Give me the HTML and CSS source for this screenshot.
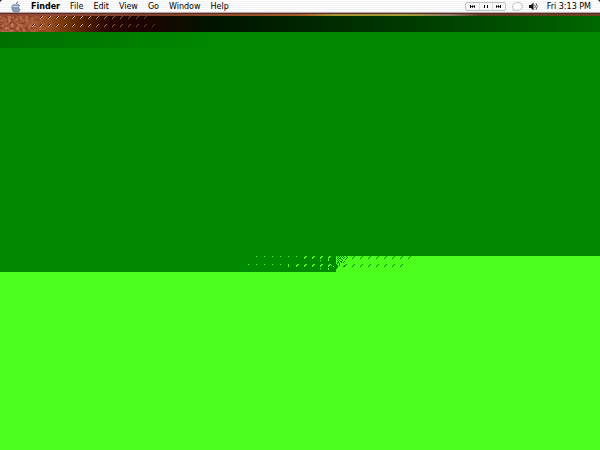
FILE: index.html
```
<!DOCTYPE html>
<html lang="en">
<head>
  <meta charset="UTF-8">
  <meta name="viewport" content="width=device-width, initial-scale=1.0">
  <title>Finder</title>
  <link rel="stylesheet" href="styles.css">
</head>
<body>
  <header class="menubar">
    <nav class="menus">
      <button class="menu apple" aria-label="Apple">
        <svg width="10" height="12" viewBox="0 0 10 12">
          <path d="M5 4C4 3 .8 3 .8 6.7c0 2.2 1.5 4.5 2.8 4.5.7 0 .9-.4 1.6-.4s.9.4 1.6.4c1.1 0 2.1-1.8 2.3-2.6C7.2 7.8 7.2 5.3 8.8 4.5 7.7 3 6 3.5 5 4z" fill="#8b9bb5" stroke="#5d6b83" stroke-width=".6"/>
          <path d="M2 5.4h5.2" stroke="#d4deed"/>
          <path d="M5 3.2C4.8 1.8 5.8.7 7.1.5 7.2 1.9 6.3 3 5 3.2z" fill="#71819c"/>
        </svg>
      </button>
      <button class="menu app-name">Finder</button>
      <button class="menu">File</button>
      <button class="menu">Edit</button>
      <button class="menu">View</button>
      <button class="menu">Go</button>
      <button class="menu">Window</button>
      <button class="menu">Help</button>
    </nav>
    <div class="extras">
      <div class="player">
        <button aria-label="Previous"><svg width="5" height="3" viewBox="0 0 5 3"><path d="M0 0h1v3H0zM3 0v3L1 1.500zM5 0v3L3 1.500z"/></svg></button>
        <button aria-label="Pause"><svg width="4" height="3" viewBox="0 0 4 3"><path d="M0 0h1v3H0zM3 0h1v3H3z"/></svg></button>
        <button aria-label="Next"><svg width="5" height="3" viewBox="0 0 5 3"><path d="M4 0h1v3H4zM0 0v3l2-1.500zM2 0v3l2-1.500z"/></svg></button>
      </div>
      <button class="menu" aria-label="Chat">
        <svg width="11" height="9" viewBox="0 0 11 9"><path d="M1 8.200C1.500 7.500 1 6.500.8 5.500.3 2.500 2.500.6 5.500.6c3 0 4.900 1.400 4.900 3.800S8.500 8.200 6 8.200z" fill="#fff" stroke="#aaa" stroke-width=".8"/></svg>
      </button>
      <button class="menu" aria-label="Volume">
        <svg width="9" height="9" viewBox="0 0 9 9"><path d="M0 3h2l2.500-2.500v8L2 6H0z" fill="#111"/><path d="M5.700 2.700q1.200 1.800 0 3.600M7 1.200q2.500 3.300 0 6.600" fill="none" stroke="#333" stroke-width=".8"/></svg>
      </button>
      <time class="clock">Fri 3:13 PM</time>
    </div>
  </header>

  <main class="desktop">
    <div class="edge"></div>
    <div class="band">
      <svg class="band-art" width="160" height="16">
        <defs>
          <filter id="grain" x="0" y="0" width="100%" height="100%" color-interpolation-filters="sRGB">
            <feTurbulence type="fractalNoise" baseFrequency=".35" numOctaves="3" seed="4"/>
            <feColorMatrix values=".5 0 0 0 .4  .45 0 0 0 .13  .35 0 0 0 .06  0 0 0 0 1"/>
          </filter>
          <linearGradient id="fade">
            <stop offset="0" stop-color="#fff"/>
            <stop offset=".4" stop-color="#fff"/>
            <stop offset="1" stop-color="#000"/>
          </linearGradient>
          <mask id="fadeMask"><rect width="56" height="16" fill="url(#fade)"/></mask>
          <pattern id="ticks" x="32" width="8" height="8" patternUnits="userSpaceOnUse">
            <path d="M0 2h1v1H0zM1 1h1v1H1zM2 0h1v1H2z" fill="#f4b47c"/>
            <path d="M0 1h1v1H0zM1 0h1v1H1z" fill="#2a0c00"/>
          </pattern>
          <linearGradient id="tickFade">
            <stop offset="0" stop-color="#fff"/>
            <stop offset=".4" stop-color="#ddd"/>
            <stop offset="1" stop-color="#444"/>
          </linearGradient>
          <mask id="tickMask"><rect x="32" width="124" height="16" fill="url(#tickFade)"/></mask>
        </defs>
        <rect width="56" height="16" filter="url(#grain)" mask="url(#fadeMask)"/>
        <path d="M40 0h112v8h4v8H32V8h8z" fill="url(#ticks)" mask="url(#tickMask)"/>
      </svg>
    </div>
    <div class="dark"></div>
    <div class="seam">
      <svg class="seam-art" width="180" height="16" shape-rendering="crispEdges">
        <g fill="#4cff1c">
          <path d="M16 0h1v1h-1zM24 0h1v1h-1zM32 0h1v1h-1zM40 0h1v1h-1zM48 0h1v1h-1zM56 0h1v1h-1zM8 8h1v1H8zM16 8h1v1h-1zM24 8h1v1h-1zM32 8h1v1h-1zM40 8h1v1h-1zM48 8h1v3h-1z"/>
          <path id="fleck" d="M64 0h3v1h-1v1h-1v1h-1V1h1V0z"/>
          <use href="#fleck" x="8"/><use href="#fleck" x="16"/><use href="#fleck" x="24"/>
          <use href="#fleck" x="-8" y="8"/><use href="#fleck" y="8"/><use href="#fleck" x="8" y="8"/><use href="#fleck" x="16" y="8"/><use href="#fleck" x="24" y="8"/>
          <path d="M80 4h1v1h-1zM88 3h1v2h-1zM80 12h1v1h-1zM88 12h1v2h-1zM91 9h1v1h-1zM93 10h1v1h-1z"/>
        </g>
        <g fill="#008800">
          <path d="M97 0h1v1h-1zM99 0h1v1h-1zM101 0h1v1h-1zM103 0h1v1h-1zM98 1h1v1h-1zM100 1h1v1h-1zM102 1h1v1h-1zM97 2h1v1h-1zM99 2h2v1h-2zM103 2h1v1h-1zM98 3h1v1h-1zM101 3h1v1h-1zM97 4h1v1h-1zM99 4h1v1h-1zM102 4h1v1h-1zM98 5h1v1h-1zM100 5h2v1h-2zM97 6h2v1h-2zM101 6h1v1h-1zM97 7h1v1h-1zM99 7h1v1h-1z"/>
          <path d="M104 1h1v1h-1zM106 0h1v1h-1zM105 3h1v1h-1zM107 1h1v1h-1zM106 2h1v1h-1zM104 5h1v1h-1zM103 6h1v1h-1z"/>
          <path d="M96 8h1v5h-1zM97 9h1v3h-1zM99 8h1v2h-1zM104 9h1v1h-1zM103 10h1v1h-1z"/>
          <path id="nick" d="M112 2h1v1h-1zM113 1h1v1h-1zM114 0h1v1h-1z"/>
          <use href="#nick" x="8"/><use href="#nick" x="16"/><use href="#nick" x="24"/><use href="#nick" x="32"/><use href="#nick" x="40"/><use href="#nick" x="48"/><use href="#nick" x="56"/>
          <use href="#nick" x="-8" y="8"/><use href="#nick" y="8"/><use href="#nick" x="8" y="8"/><use href="#nick" x="16" y="8"/><use href="#nick" x="24" y="8"/><use href="#nick" x="32" y="8"/><use href="#nick" x="40" y="8"/><use href="#nick" x="48" y="8"/>
        </g>
      </svg>
    </div>
    <div class="bright"></div>
  </main>
</body>
</html>
```
FILE: styles.css
```
* {
  box-sizing: border-box;
}
body {
  display: flex;
  flex-direction: column;
  min-height: 100vh;
  margin: 0;
  background: #000;
  font-family: "DejaVu Sans", "Noto Sans", sans-serif;
  font-size: 8px;
  line-height: 12px;
  color: #000;
}
button {
  display: flex;
  align-items: center;
  padding: 0;
  border: 0;
  background: none;
  font: inherit;
  color: inherit;
}
svg {
  display: block;
}
.menubar {
  display: flex;
  justify-content: space-between;
  height: 13px;
  padding: 1px 9px 0 11px;
  background: repeating-linear-gradient(#fff 0 1px, #f2f2f4 1px 2px);
  border-bottom: 1px solid #b9a8a8;
  border-radius: 3px 3px 0 0;
}
.menus {
  display: flex;
  gap: 10px;
}
.app-name {
  font-weight: 700;
}
.extras {
  display: flex;
  align-items: center;
  gap: 6px;
}
.player {
  display: flex;
  height: 9px;
  border: 1px solid #c4c4c4;
  border-radius: 2px;
}
.player button {
  justify-content: center;
  width: 13px;
}
.player button + button {
  border-left: 1px solid #ddd;
}
.clock {
  margin-left: 3px;
}
.desktop {
  display: flex;
  flex: 1;
  flex-direction: column;
}
.edge {
  height: 3px;
  background: linear-gradient(90deg, #9a4c38, #80402c 25%, #a65c28 50%, #a89830 56%, #a0a038 68%, #8c7860 75%, #5c3c20 80%, #704020);
  border-top: 1px solid #5a2c28;
}
.band {
  height: 16px;
  background: linear-gradient(90deg, #a85c34, #964a1c 8%, #5c2800 13%, #280400 18%, #1c0400 24%, #001400 36%, #003000 60%, #005000 85%, #006800);
}
.dark {
  flex: 224;
  background: linear-gradient(90deg, #007000, #008800 35%) top / 100% 16px no-repeat #008800;
}
.seam {
  height: 16px;
  background: linear-gradient(90deg, #008800 56%, #4cff1c 56%);
}
.seam-art {
  margin-left: 40%;
}
.bright {
  flex: 178;
  background: #4cff1c;
}
```
